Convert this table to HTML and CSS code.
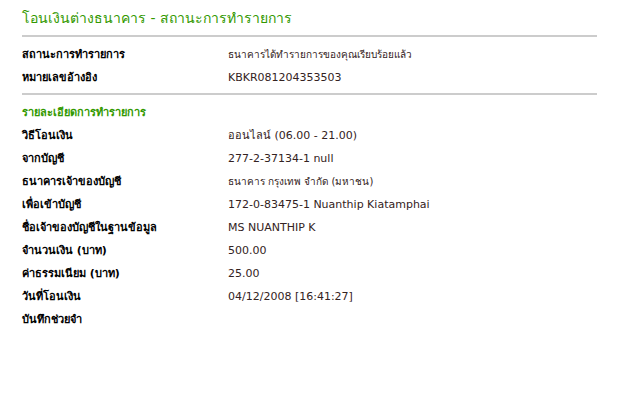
FILE: index.html
```html
<!DOCTYPE html>
<html>
<head>
	<title>สถานะการทำรายการ</title>
	<link rel="stylesheet" href="styles.css">
</head>
<body>
	<div class='page'>
		<h1 class='title'>โอนเงินต่างธนาคาร - สถานะการทำรายการ</h1>
		<div class='block'>
			<div class='row'><span class='label'>สถานะการทำรายการ</span><span class='value thai'>ธนาคารได้ทำรายการของคุณเรียบร้อยแล้ว</span></div>
			<div class='row'><span class='label'>หมายเลขอ้างอิง</span><span class='value'>KBKR081204353503</span></div>
		</div>
		<div class='block last'>
			<h2 class='section'>รายละเอียดการทำรายการ</h2>
			<div class='row'><span class='label'>วิธีโอนเงิน</span><span class='value'>ออนไลน์ (06.00 - 21.00)</span></div>
			<div class='row'><span class='label'>จากบัญชี</span><span class='value'>277-2-37134-1 null</span></div>
			<div class='row'><span class='label'>ธนาคารเจ้าของบัญชี</span><span class='value thai'>ธนาคาร กรุงเทพ จำกัด (มหาชน)</span></div>
			<div class='row'><span class='label'>เพื่อเข้าบัญชี</span><span class='value'>172-0-83475-1 Nuanthip Kiatamphai</span></div>
			<div class='row'><span class='label'>ชื่อเจ้าของบัญชีในฐานข้อมูล</span><span class='value'>MS NUANTHIP K</span></div>
			<div class='row'><span class='label'>จำนวนเงิน (บาท)</span><span class='value'>500.00</span></div>
			<div class='row'><span class='label'>ค่าธรรมเนียม (บาท)</span><span class='value'>25.00</span></div>
			<div class='row'><span class='label'>วันที่โอนเงิน</span><span class='value'>04/12/2008 [16:41:27]</span></div>
			<div class='row'><span class='label'>บันทึกช่วยจำ</span><span class='value'></span></div>
		</div>
	</div>
</body>
</html>
```
FILE: styles.css
```css
body {
	margin: 0;
	background: #ffffff;
	font-family: "DejaVu Sans", Tahoma, sans-serif;
	font-size: 11px;
	color: #000000;
}

.page {
	width: 575px;
	padding: 9px 0 0 22px;
}

.title {
	margin: 0;
	padding-bottom: 8px;
	border-bottom: solid 2px #cccccc;
	color: #339900;
	font-size: 14px;
	font-weight: normal;
	line-height: 18px;
}

.block {
	padding: 6px 0 4px 0;
	border-bottom: solid 2px #cccccc;
}

.block.last {
	border-bottom: none;
	padding-top: 6px;
}

.section {
	margin: 0;
	color: #339900;
	font-size: 11px;
	font-weight: bold;
	line-height: 23px;
}

.row {
	display: flex;
	line-height: 23px;
	height: 23px;
}

.label {
	width: 206px;
	flex-shrink: 0;
	font-weight: bold;
}

.value {
	color: #332222;
}

.value.thai {
	font-size: 10px;
}
```
